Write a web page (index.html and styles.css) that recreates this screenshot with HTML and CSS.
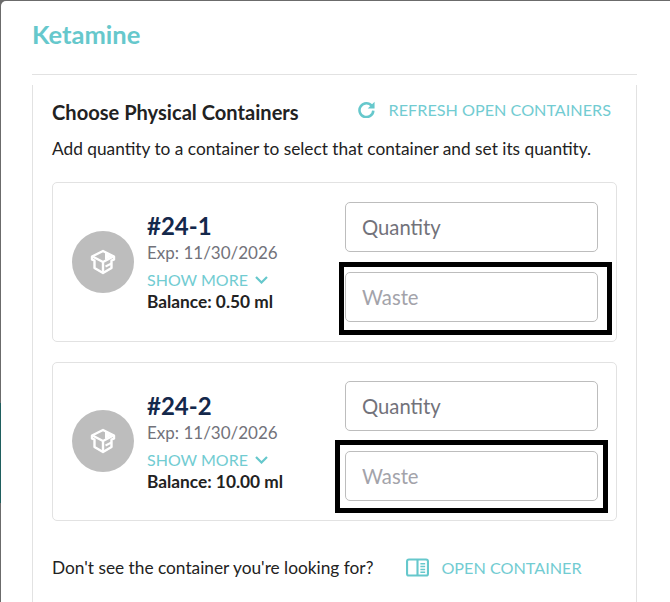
FILE: index.html
```html
<!DOCTYPE html>
<html lang="en">
<head>
    <meta charset="UTF-8">
    <meta name="viewport" content="width=device-width, initial-scale=1.0">
    <title>Ketamine</title>
    <link rel="stylesheet" href="styles.css">
</head>
<body>

    <span class="backdrop-accent"></span>

    <div class="modal">
        <h1 class="modal-title">Ketamine</h1>

        <div class="panel">
            <div class="panel-head">
                <h2 class="panel-title">Choose Physical Containers</h2>
                <a class="link refresh-link">
                    <svg class="refresh-icon" viewBox="0 0 16 16" fill="none" stroke="#66c8cc" stroke-width="2.4">
                        <path d="M13 4.600A6.500 6.500 0 1 0 14.400 9"/>
                        <path d="M15.600 .6v6.400H9.200z" fill="#66c8cc" stroke="none"/>
                    </svg>
                    REFRESH OPEN CONTAINERS
                </a>
            </div>
            <p class="panel-text">Add quantity to a container to select that container and set its quantity.</p>

            <div class="card">
                <div class="card-badge">
                    <svg class="box-icon" viewBox="0 0 26 26" fill="none" stroke="#fff" stroke-width="2.4" stroke-linejoin="round">
                        <path d="M13 2 24 7.500v3l-2.500 1.200v7.300L13 24l-8.500-5v-7.300L2 10.500v-3z"/>
                        <path d="M2.500 7.500 13 13l10.500-5.500M13 13v10"/>
                        <path d="M15 3.500v7.500l7-3.500z" fill="#fff" stroke="none"/>
                        <path d="M15.500 17.500l6-3" stroke-width="2"/>
                    </svg>
                </div>
                <div class="card-info">
                    <div class="card-number">#24-1</div>
                    <div class="card-exp">Exp: 11/30/2026</div>
                    <a class="link show-more">SHOW MORE
                        <svg class="chevron" viewBox="0 0 13 8" fill="none" stroke="#66c8cc" stroke-width="2.2"><path d="M1 1l5.500 5.500L12 1"/></svg>
                    </a>
                    <div class="card-balance">Balance: 0.50 ml</div>
                </div>
                <div class="card-fields">
                    <input class="field" type="text" placeholder="Quantity">
                    <input class="field field-waste" type="text" placeholder="Waste">
                </div>
            </div>

            <div class="card">
                <div class="card-badge">
                    <svg class="box-icon" viewBox="0 0 26 26" fill="none" stroke="#fff" stroke-width="2.4" stroke-linejoin="round">
                        <path d="M13 2 24 7.500v3l-2.500 1.200v7.300L13 24l-8.500-5v-7.300L2 10.500v-3z"/>
                        <path d="M2.500 7.500 13 13l10.500-5.500M13 13v10"/>
                        <path d="M15 3.500v7.500l7-3.500z" fill="#fff" stroke="none"/>
                        <path d="M15.500 17.500l6-3" stroke-width="2"/>
                    </svg>
                </div>
                <div class="card-info">
                    <div class="card-number">#24-2</div>
                    <div class="card-exp">Exp: 11/30/2026</div>
                    <a class="link show-more">SHOW MORE
                        <svg class="chevron" viewBox="0 0 13 8" fill="none" stroke="#66c8cc" stroke-width="2.2"><path d="M1 1l5.500 5.500L12 1"/></svg>
                    </a>
                    <div class="card-balance">Balance: 10.00 ml</div>
                </div>
                <div class="card-fields">
                    <input class="field" type="text" placeholder="Quantity">
                    <input class="field field-waste" type="text" placeholder="Waste">
                </div>
            </div>

            <div class="panel-foot">
                <span class="foot-text">Don't see the container you're looking for?</span>
                <a class="link open-link">
                    <svg class="book-icon" viewBox="0 0 24 19" fill="none" stroke="#66c8cc" stroke-width="2.2">
                        <rect x="1.100" y="1.100" width="21.800" height="16.800" rx="2"/>
                        <path d="M12 1v17"/>
                        <path d="M15 5.500h5M15 8.500h5M15 11.500h5M15 14.500h5" stroke-width="1.500"/>
                    </svg>
                    OPEN CONTAINER
                </a>
            </div>
        </div>
    </div>

    <!-- black marker boxes drawn over the screenshot -->
    <div class="marker marker-one"></div>
    <div class="marker marker-two"></div>

</body>
</html>
```

FILE: styles.css
```css
html, body {
    height: 100%;
}
body {
    margin: 0;
    overflow: hidden;
    position: relative;
    background-color: #6b6b6b;
    font-family: 'Lato', 'Liberation Sans', sans-serif;
    color: #222;
}
.backdrop-accent {
    position: absolute;
    left: 0;
    top: 403px;
    width: 1px;
    height: 100px;
    background-color: #1f5f5f;
}
.modal {
    margin: 1px 0 0 1px;
    height: 601px;
    box-sizing: border-box;
    padding: 0 33px 0 31px;
    background-color: #fff;
    border-top-left-radius: 5px;
}
.modal-title {
    margin: 0;
    height: 74px;
    box-sizing: border-box;
    padding-top: 17px;
    border-bottom: 1px solid #e2e2e2;
    font-size: 25.500px;
    line-height: 32px;
    font-weight: 700;
    color: #66c8cc;
}
.panel {
    margin-top: 10px;
    height: 520px;
    box-sizing: border-box;
    padding: 0 19px;
    border-left: 1px solid #e2e2e2;
    border-right: 1px solid #e2e2e2;
}
.panel-head {
    display: flex;
    justify-content: space-between;
    align-items: center;
    padding: 13px 6px 0 0;
}
.panel-title {
    margin: 0;
    font-size: 20.100px;
    line-height: 28px;
    font-weight: 700;
    color: #222;
}
.link {
    display: inline-flex;
    align-items: center;
    color: #72ccd2;
    font-size: 16.200px;
}
.refresh-link {
    gap: 14px;
    margin-bottom: 6px;
}
.refresh-icon {
    width: 17px;
    height: 17px;
}
.panel-text {
    margin: 10px 0 0;
    font-size: 17.300px;
    line-height: 26px;
    color: #222;
}
.card {
    display: flex;
    align-items: center;
    height: 159.600px;
    box-sizing: border-box;
    margin-top: 20px;
    padding: 0 18px 0 19px;
    border: 1px solid #e2e2e2;
    border-radius: 5px;
}
.card-badge {
    width: 62px;
    height: 62px;
    flex: none;
    display: flex;
    justify-content: center;
    align-items: center;
    border-radius: 50%;
    background-color: #bdbdbd;
}
.box-icon {
    width: 26px;
    height: 26px;
}
.card-info {
    flex: 1;
    margin-left: 13px;
}
.card-number {
    font-size: 24px;
    line-height: 30px;
    font-weight: 700;
    color: #14284b;
}
.card-exp {
    font-size: 17px;
    line-height: 24px;
    color: #72727a;
}
.show-more {
    gap: 7px;
    margin-top: 3px;
    font-size: 16px;
    line-height: 24px;
}
.chevron {
    width: 13px;
    height: 8px;
}
.card-balance {
    font-size: 17.300px;
    line-height: 20px;
    font-weight: 700;
    color: #222;
}
.card-fields {
    width: 253px;
    flex: none;
    display: flex;
    flex-direction: column;
    gap: 20px;
}
.field {
    display: block;
    width: 100%;
    height: 50px;
    box-sizing: border-box;
    padding: 0 16px;
    border: 1px solid #bdbdbd;
    border-radius: 5px;
    outline: none;
    background-color: #fff;
    font-family: inherit;
    font-size: 20.250px;
}
.field::placeholder {
    color: #72727a;
    opacity: 1;
}
.field-waste::placeholder {
    color: #a3a3aa;
}
.panel-foot {
    display: flex;
    align-items: center;
    margin-top: 33px;
}
.foot-text {
    padding-top: 1px;
    font-size: 17.300px;
    line-height: 26px;
    color: #222;
}
.open-link {
    gap: 12px;
    margin-left: 33px;
}
.book-icon {
    width: 23px;
    height: 19px;
}
.marker {
    position: absolute;
    box-sizing: border-box;
    width: 273px;
    height: 73px;
    border: 5px solid #000;
}
.marker-one {
    left: 339px;
    top: 262px;
}
.marker-two {
    left: 335px;
    top: 440px;
}
```
